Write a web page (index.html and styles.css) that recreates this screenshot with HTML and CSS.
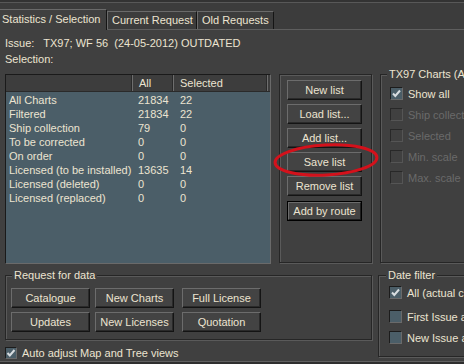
FILE: index.html
```html
<!DOCTYPE html>
<html>
<head>
<meta charset="utf-8">
<link rel="stylesheet" href="styles.css">
</head>
<body>
<div class="win">
  <div class="topstrip"></div>
  <div class="tabbar">
    <div class="tab active">Statistics / Selection</div>
    <div class="tab t2">Current Request</div>
    <div class="tab t3">Old Requests</div>
  </div>
  <div class="panel">
    <div class="info">Issue:   TX97; WF 56  (24-05-2012) OUTDATED</div>
    <div class="info">Selection:</div>
    <div class="main">
      <div class="list">
        <div class="lhead">
          <div class="h1"></div>
          <div class="h2">All</div>
          <div class="h3">Selected</div>
        </div>
        <div class="lbody">
          <div class="row"><span class="c1">All Charts</span><span class="c2">21834</span><span class="c3">22</span></div>
          <div class="row"><span class="c1">Filtered</span><span class="c2">21834</span><span class="c3">22</span></div>
          <div class="row"><span class="c1">Ship collection</span><span class="c2">79</span><span class="c3">0</span></div>
          <div class="row"><span class="c1">To be corrected</span><span class="c2">0</span><span class="c3">0</span></div>
          <div class="row"><span class="c1">On order</span><span class="c2">0</span><span class="c3">0</span></div>
          <div class="row"><span class="c1">Licensed (to be installed)</span><span class="c2">13635</span><span class="c3">14</span></div>
          <div class="row"><span class="c1">Licensed (deleted)</span><span class="c2">0</span><span class="c3">0</span></div>
          <div class="row"><span class="c1">Licensed (replaced)</span><span class="c2">0</span><span class="c3">0</span></div>
        </div>
      </div>
      <div class="group btns">
        <div class="btn">New list</div>
        <div class="btn">Load list...</div>
        <div class="btn">Add list...</div>
        <div class="btn">Save list</div>
        <div class="btn">Remove list</div>
        <div class="btn default"><div class="inner">Add by route</div></div>
      </div>
      <div class="group charts">
        <div class="legend">TX97 Charts (Actual)</div>
        <div class="chk first"><span class="box checked"><svg viewBox="0 0 13 13" width="13" height="13"><path d="M3 6.5 L5.3 9 L10 3.5" fill="none" stroke="#d8dde0" stroke-width="2"/></svg></span><span>Show all</span></div>
        <div class="chk dis"><span class="box"></span><span>Ship collection</span></div>
        <div class="chk dis"><span class="box"></span><span>Selected</span></div>
        <div class="chk dis"><span class="box"></span><span>Min. scale</span></div>
        <div class="chk dis"><span class="box"></span><span>Max. scale</span></div>
      </div>
    </div>
    <div class="bottom">
      <div class="leftcol">
        <div class="group req">
          <div class="legend">Request for data</div>
          <div class="rgrid">
            <div class="btn">Catalogue</div>
            <div class="btn">New Charts</div>
            <div class="btn">Full License</div>
            <div class="btn">Updates</div>
            <div class="btn">New Licenses</div>
            <div class="btn">Quotation</div>
          </div>
        </div>
        <div class="chk auto"><span class="box checked"><svg viewBox="0 0 13 13" width="13" height="13"><path d="M2.5 6 L4.8 8.5 L9.5 3" fill="none" stroke="#d8dde0" stroke-width="2"/></svg></span><span>Auto adjust Map and Tree views</span></div>
      </div>
      <div class="group dates">
        <div class="legend">Date filter</div>
        <div class="chk d1"><span class="box checked"><svg viewBox="0 0 13 13" width="13" height="13"><path d="M3 6.5 L5.3 9 L10 3.5" fill="none" stroke="#d8dde0" stroke-width="2"/></svg></span><span>All (actual charts)</span></div>
        <div class="chk d2"><span class="box en"></span><span>First Issue after</span></div>
        <div class="chk d3"><span class="box en"></span><span>New Issue after</span></div>
      </div>
    </div>
  </div>
  <div class="botstrip"></div>
  <svg class="ring" width="112" height="46" viewBox="0 0 112 46"><ellipse cx="56" cy="23" rx="51" ry="15" fill="none" stroke="#d4111b" stroke-width="3" transform="rotate(-3 56 23)"/></svg>
</div>
</body>
</html>
```

FILE: styles.css
```css
* { box-sizing: border-box; }
html, body { margin: 0; padding: 0; }
body {
  background: #404040;
  font-family: "Liberation Sans", Arial, sans-serif;
  font-size: 11px;
  color: #ece4d1;
}
.win {
  width: 464px;
  height: 364px;
  overflow: hidden;
  position: relative;
  background: #404040;
  display: flex;
  flex-direction: column;
}
.topstrip {
  height: 3px;
  background: #333;
  border-bottom: 1px solid #585858;
  flex: none;
}
.tabbar {
  height: 27px;
  flex: none;
  display: flex;
  align-items: flex-end;
  background: #3c3c3c;
  border-bottom: 1px solid #5e5e5e;
}
.tab {
  height: 18px;
  line-height: 17px;
  padding-left: 4px;
  white-space: nowrap;
  border-top: 1px solid #6a6a6a;
  border-left: 1px solid #6a6a6a;
  border-right: 1px solid #151515;
  background: #3c3c3c;
}
.tab.active {
  width: 107px;
  height: 21px;
  line-height: 19px;
  padding-left: 2px;
  margin-bottom: -1px;
  background: #404040;
  border-left: none;
  position: relative;
}
.tab.t2 { width: 90px; }
.tab.t3 { width: 77px; }
.panel {
  flex: 1;
  padding: 5px 0 0 5px;
  border-bottom: 1px solid #606060;
}
.info {
  height: 16px;
  line-height: 16px;
  white-space: pre;
}
.main {
  display: flex;
  margin-top: 7px;
  height: 190px;
}
.list {
  width: 266px;
  height: 190px;
  flex: none;
  border: 1px solid;
  border-color: #1a1a1a #6a6a6a #6a6a6a #1a1a1a;
  display: flex;
  flex-direction: column;
}
.lhead {
  height: 17px;
  display: flex;
  background: #3d3d3d;
  border-bottom: 1px solid #2a2a2a;
  flex: none;
}
.lhead > div {
  line-height: 16px;
  border-right: 1px solid #6e6e6e;
  box-shadow: inset -1px 0 #2a2a2a;
}
.h1 { width: 127px; }
.h2 { width: 41px; padding-left: 6px; }
.h3 { width: 94px; padding-left: 6px; }
.lbody {
  flex: 1;
  background: #4b5e68;
  padding-top: 1px;
}
.row {
  height: 14px;
  line-height: 14px;
  display: flex;
  white-space: nowrap;
}
.c1 { width: 127px; padding-left: 3px; }
.c2 { width: 41px; padding-left: 5px; }
.c3 { padding-left: 6px; }

.group {
  border: 1px solid #262626;
  box-shadow: inset 1px 1px #5a5a5a, 1px 1px #5a5a5a;
  flex: none;
}
.legend {
  display: block;
  width: max-content;
  height: 13px;
  line-height: 13px;
  margin-top: -7px;
  padding: 0 2px;
  background: #404040;
  white-space: nowrap;
}
.btns {
  width: 93px;
  height: 189px;
  margin-left: 8px;
  padding: 5px 0 0 7px;
}
.btn {
  width: 75px;
  height: 20px;
  line-height: 18px;
  text-align: center;
  white-space: nowrap;
  background: #434343;
  border: 1px solid;
  border-color: #6c6c6c #141414 #141414 #6c6c6c;
  box-shadow: inset -1px -1px #2a2a2a;
}
.btns .btn { margin-bottom: 4px; }
.btns .btn.default {
  margin-top: 5px;
  border: 1px solid #000;
  box-shadow: none;
  padding: 0;
  height: 20px;
}
.btn.default .inner {
  height: 18px;
  line-height: 16px;
  border: 1px solid;
  border-color: #6c6c6c #1e1e1e #1e1e1e #6c6c6c;
}
.charts {
  width: 110px;
  height: 189px;
  margin-left: 8px;
  padding-left: 6px;
}
.chk {
  display: flex;
  align-items: center;
  height: 13px;
  white-space: nowrap;
}
.chk .box {
  width: 13px;
  height: 13px;
  flex: none;
  margin-right: 5px;
  border: 1px solid;
  border-color: #1c1c1c #6a6a6a #6a6a6a #1c1c1c;
  background: #404040;
  position: relative;
}
.chk .box.checked, .chk .box.en { background: #4b5e68; }
.chk .box svg { position: absolute; left: -1px; top: -1px; }
.chk.dis { color: #6a6a6a; }
.chk.dis .box { border-color: #282828 #555 #555 #282828; }
.charts .chk { margin-left: 3px; margin-top: 8px; }
.charts .chk.first { margin-top: 6px; }

.bottom {
  display: flex;
  margin-top: 11px;
}
.leftcol { display: flex; flex-direction: column; }
.req {
  width: 367px;
  height: 65px;
  padding-left: 5px;
}
.req .legend { margin-left: 1px; }
.rgrid {
  display: grid;
  grid-template-columns: 84px 87px 79px;
  row-gap: 4px;
  margin-top: 6px;
}
.rgrid .btn { width: 79px; }
.chk.auto { margin-top: 6px; height: 13px; }
.chk.auto .box { width: 12px; height: 12px; margin-right: 5px; }
.dates {
  width: 100px;
  height: 82px;
  margin-left: 6px;
  padding-left: 7px;
}
.dates .chk { margin-left: 3px; }
.dates .chk.d1 { margin-top: 4px; }
.dates .chk.d2 { margin-top: 11px; }
.dates .chk.d3 { margin-top: 8px; }
.botstrip {
  height: 2px;
  flex: none;
  background: #2e2e2e;
}
.ring {
  position: absolute;
  left: 270px;
  top: 137px;
}
```
